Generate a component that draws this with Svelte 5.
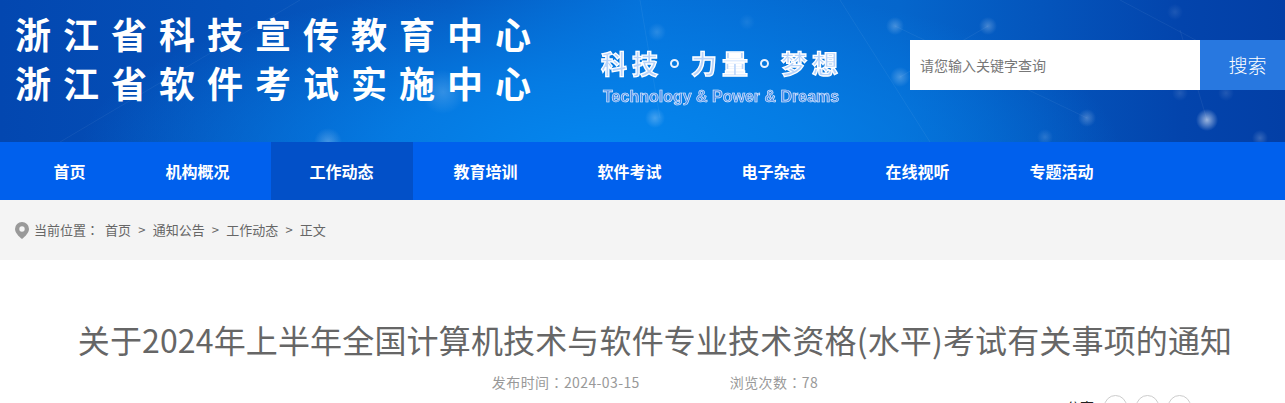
<script>
  const navItems = ["首页", "机构概况", "工作动态", "教育培训", "软件考试", "电子杂志", "在线视听", "专题活动"];
  const activeNav = "工作动态";
  const crumbs = ["首页", "通知公告", "工作动态", "正文"];
</script>

<div class="page">
  <header class="banner">
    <svg class="banner-lines" width="1285" height="142" viewBox="0 0 1285 142">
      <g stroke="#fff" stroke-opacity="0.06" fill="none">
        <path d="M840 0L930 142M895 26L1087 118M988 26L900 77M1120 0L1290 90M1207 120L1180 30"/>
        <path d="M640 0L660 118M60 142L300 0"/>
      </g>
    </svg>
    <div class="site-name">
      <div>浙江省科技宣传教育中心</div>
      <div>浙江省软件考试实施中心</div>
    </div>
    <div class="slogan">
      <div class="slogan-cn">
        <span class="word">科技</span><i class="ring"></i><span class="word">力量</span><i class="ring"></i><span class="word">梦想</span>
      </div>
      <div class="slogan-en">Technology &amp; Power &amp; Dreams</div>
    </div>
    <div class="search">
      <div class="search-input">请您输入关键字查询</div>
      <div class="search-btn">搜索</div>
    </div>
  </header>

  <nav class="nav">
    {#each navItems as item}
      <a class="nav-item" class:active={item === activeNav}>{item}</a>
    {/each}
  </nav>

  <div class="crumbs">
    <svg class="pin" width="14" height="17" viewBox="0 0 14 17">
      <path fill="#999" fill-rule="evenodd" d="M7 0a7 7 0 0 1 7 7c0 3.6-3.6 7.4-7 10C3.600 14.400 0 10.600 0 7a7 7 0 0 1 7-7zm0 4.300a2.700 2.700 0 1 0 0 5.400a2.700 2.700 0 0 0 0-5.400z"/>
    </svg>
    <span class="crumb-label">当前位置<span class="colon">：</span></span>
    {#each crumbs as crumb, i}
      {#if i > 0}<span class="sep">&gt;</span>{/if}
      <span>{crumb}</span>
    {/each}
  </div>

  <article class="article">
    <h1>关于2024年上半年全国计算机技术与软件专业技术资格(水平)考试有关事项的通知</h1>
    <div class="meta">
      <span>发布时间<span class="colon">：</span>2024-03-15</span>
      <span>浏览次数<span class="colon">：</span>78</span>
    </div>
    <div class="share">
      <span class="share-label">分享</span>
      <i class="share-btn"><b></b></i>
      <i class="share-btn"><b></b></i>
      <i class="share-btn"><b></b></i>
    </div>
  </article>
</div>

<style>
  :global(body) {
    margin: 0;
    background: #fff;
  }
  .page {
    height: 403px;
    overflow: hidden;
    font-family: "Noto Sans CJK SC", "Liberation Sans", sans-serif;
  }
  .colon {
    font-family: "Noto Sans CJK TC", sans-serif;
  }
  .banner {
    position: relative;
    height: 142px;
    display: flex;
    align-items: flex-start;
    background:
      radial-gradient(circle at 895px 26px, rgba(255, 255, 255, 0.25), rgba(255, 255, 255, 0) 9px),
      radial-gradient(circle at 988px 26px, rgba(255, 255, 255, 0.25), rgba(255, 255, 255, 0) 9px),
      radial-gradient(circle at 657px 32px, rgba(255, 255, 255, 0.15), rgba(255, 255, 255, 0) 9px),
      radial-gradient(circle at 747px 22px, rgba(255, 255, 255, 0.08), rgba(255, 255, 255, 0) 8px),
      radial-gradient(circle at 900px 77px, rgba(255, 255, 255, 0.25), rgba(255, 255, 255, 0) 10px),
      radial-gradient(circle at 655px 118px, rgba(255, 255, 255, 0.25), rgba(255, 255, 255, 0) 10px),
      radial-gradient(circle at 1087px 118px, rgba(255, 255, 255, 0.25), rgba(255, 255, 255, 0) 9px),
      radial-gradient(circle at 1207px 120px, rgba(255, 255, 255, 0.6), rgba(255, 255, 255, 0) 11px),
      radial-gradient(circle at 1045px 137px, rgba(255, 255, 255, 0.15), rgba(255, 255, 255, 0) 8px),
      radial-gradient(circle at 1260px 138px, rgba(255, 255, 255, 0.2), rgba(255, 255, 255, 0) 8px),
      radial-gradient(circle at 1175px 12px, rgba(255, 255, 255, 0.1), rgba(255, 255, 255, 0) 8px),
      radial-gradient(circle at 1180px 93px, rgba(255, 255, 255, 0.12), rgba(255, 255, 255, 0) 8px),
      radial-gradient(circle at 1226px 93px, rgba(255, 255, 255, 0.12), rgba(255, 255, 255, 0) 8px),
      radial-gradient(circle at 443px 92px, rgba(255, 255, 255, 0.18), rgba(255, 255, 255, 0) 22px),
      radial-gradient(circle at 328px 142px, rgba(255, 255, 255, 0.25), rgba(255, 255, 255, 0) 14px),
      radial-gradient(ellipse 520px 170px at 600px 150px, #0586ee 0%, rgba(5, 128, 232, 0.85) 40%, rgba(5, 100, 210, 0) 100%),
      linear-gradient(90deg, #0347b0 0%, #0559c0 35%, #0570d8 50%, #0566cc 70%, #0344ac 92%, #033fa6 100%);
  }
  .banner-lines {
    position: absolute;
    top: 0;
    left: 0;
  }
  .site-name {
    position: relative;
    width: 601px;
    padding: 9px 0 0 15px;
    box-sizing: border-box;
    color: #fff;
    font-size: 36px;
    font-weight: 700;
    line-height: 49px;
    letter-spacing: 12px;
    white-space: nowrap;
  }
  .slogan {
    position: relative;
    width: 309px;
    padding-top: 42px;
    box-sizing: border-box;
    white-space: nowrap;
    filter: blur(0.3px);
  }
  .slogan-cn {
    display: flex;
    align-items: center;
    justify-content: space-between;
    width: 237px;
    color: #b9d4fa;
    font-size: 26px;
    font-weight: 700;
    line-height: 42px;
    -webkit-text-stroke: 1.3px #fff;
  }
  .word {
    letter-spacing: 5px;
    margin-right: -5px;
  }
  .ring {
    width: 5px;
    height: 5px;
    border: 2px solid #e8f1ff;
    border-radius: 50%;
  }
  .slogan-en {
    margin-top: 2px;
    padding-left: 2px;
    color: #4f8fea;
    font-family: "Liberation Sans", sans-serif;
    font-size: 16px;
    font-weight: 700;
    line-height: 22px;
    -webkit-text-stroke: 0.6px #e8f1ff;
  }
  .search {
    position: relative;
    display: flex;
    flex: 1;
    height: 50px;
    margin-top: 40px;
  }
  .search-input {
    width: 290px;
    box-sizing: border-box;
    padding-left: 10px;
    background: #fff;
    color: #777;
    font-size: 14px;
    line-height: 51px;
  }
  .search-btn {
    flex: 1;
    padding-left: 10px;
    background: #2878e0;
    color: #fff;
    text-align: center;
    font-size: 19px;
    font-weight: 300;
    line-height: 50px;
  }
  .nav {
    display: flex;
    gap: 2px;
    height: 58px;
    padding-left: 15px;
    background: #0060ed;
  }
  .nav-item {
    padding: 0 39.5px 0 38.5px;
    color: #fff;
    font-size: 16px;
    font-weight: 700;
    line-height: 58px;
  }
  .nav-item.active {
    background: #0250c8;
  }
  .crumbs {
    display: flex;
    align-items: center;
    height: 60px;
    padding-left: 15px;
    background: #f4f4f4;
    color: #666;
    font-size: 13px;
    line-height: 18px;
  }
  .pin {
    margin-right: 5px;
  }
  .crumb-label {
    margin-right: 6px;
  }
  .sep {
    margin: 0 7.2px;
  }
  .article {
    padding-top: 58px;
  }
  h1 {
    margin: 0;
    padding-left: 25px;
    color: #666;
    font-size: 32px;
    font-weight: 400;
    line-height: 42px;
    letter-spacing: 0.15px;
    text-align: center;
    white-space: nowrap;
  }
  .meta {
    display: flex;
    gap: 90px;
    justify-content: center;
    margin-top: 12px;
    padding-left: 25px;
    color: #999;
    font-size: 14px;
    line-height: 20px;
    letter-spacing: 0.4px;
  }
  .share {
    display: flex;
    align-items: center;
    justify-content: flex-end;
    gap: 9px;
    margin-top: 3px;
    padding-right: 94px;
  }
  .share-label {
    margin-right: 1px;
    color: #222;
    font-size: 14px;
  }
  .share-btn {
    display: flex;
    align-items: center;
    justify-content: center;
    width: 21px;
    height: 21px;
    border: 1px solid #ccc;
    border-radius: 50%;
  }
  .share-btn b {
    width: 7px;
    height: 8px;
    border-radius: 50%;
    background: #e2e2e2;
  }
</style>
